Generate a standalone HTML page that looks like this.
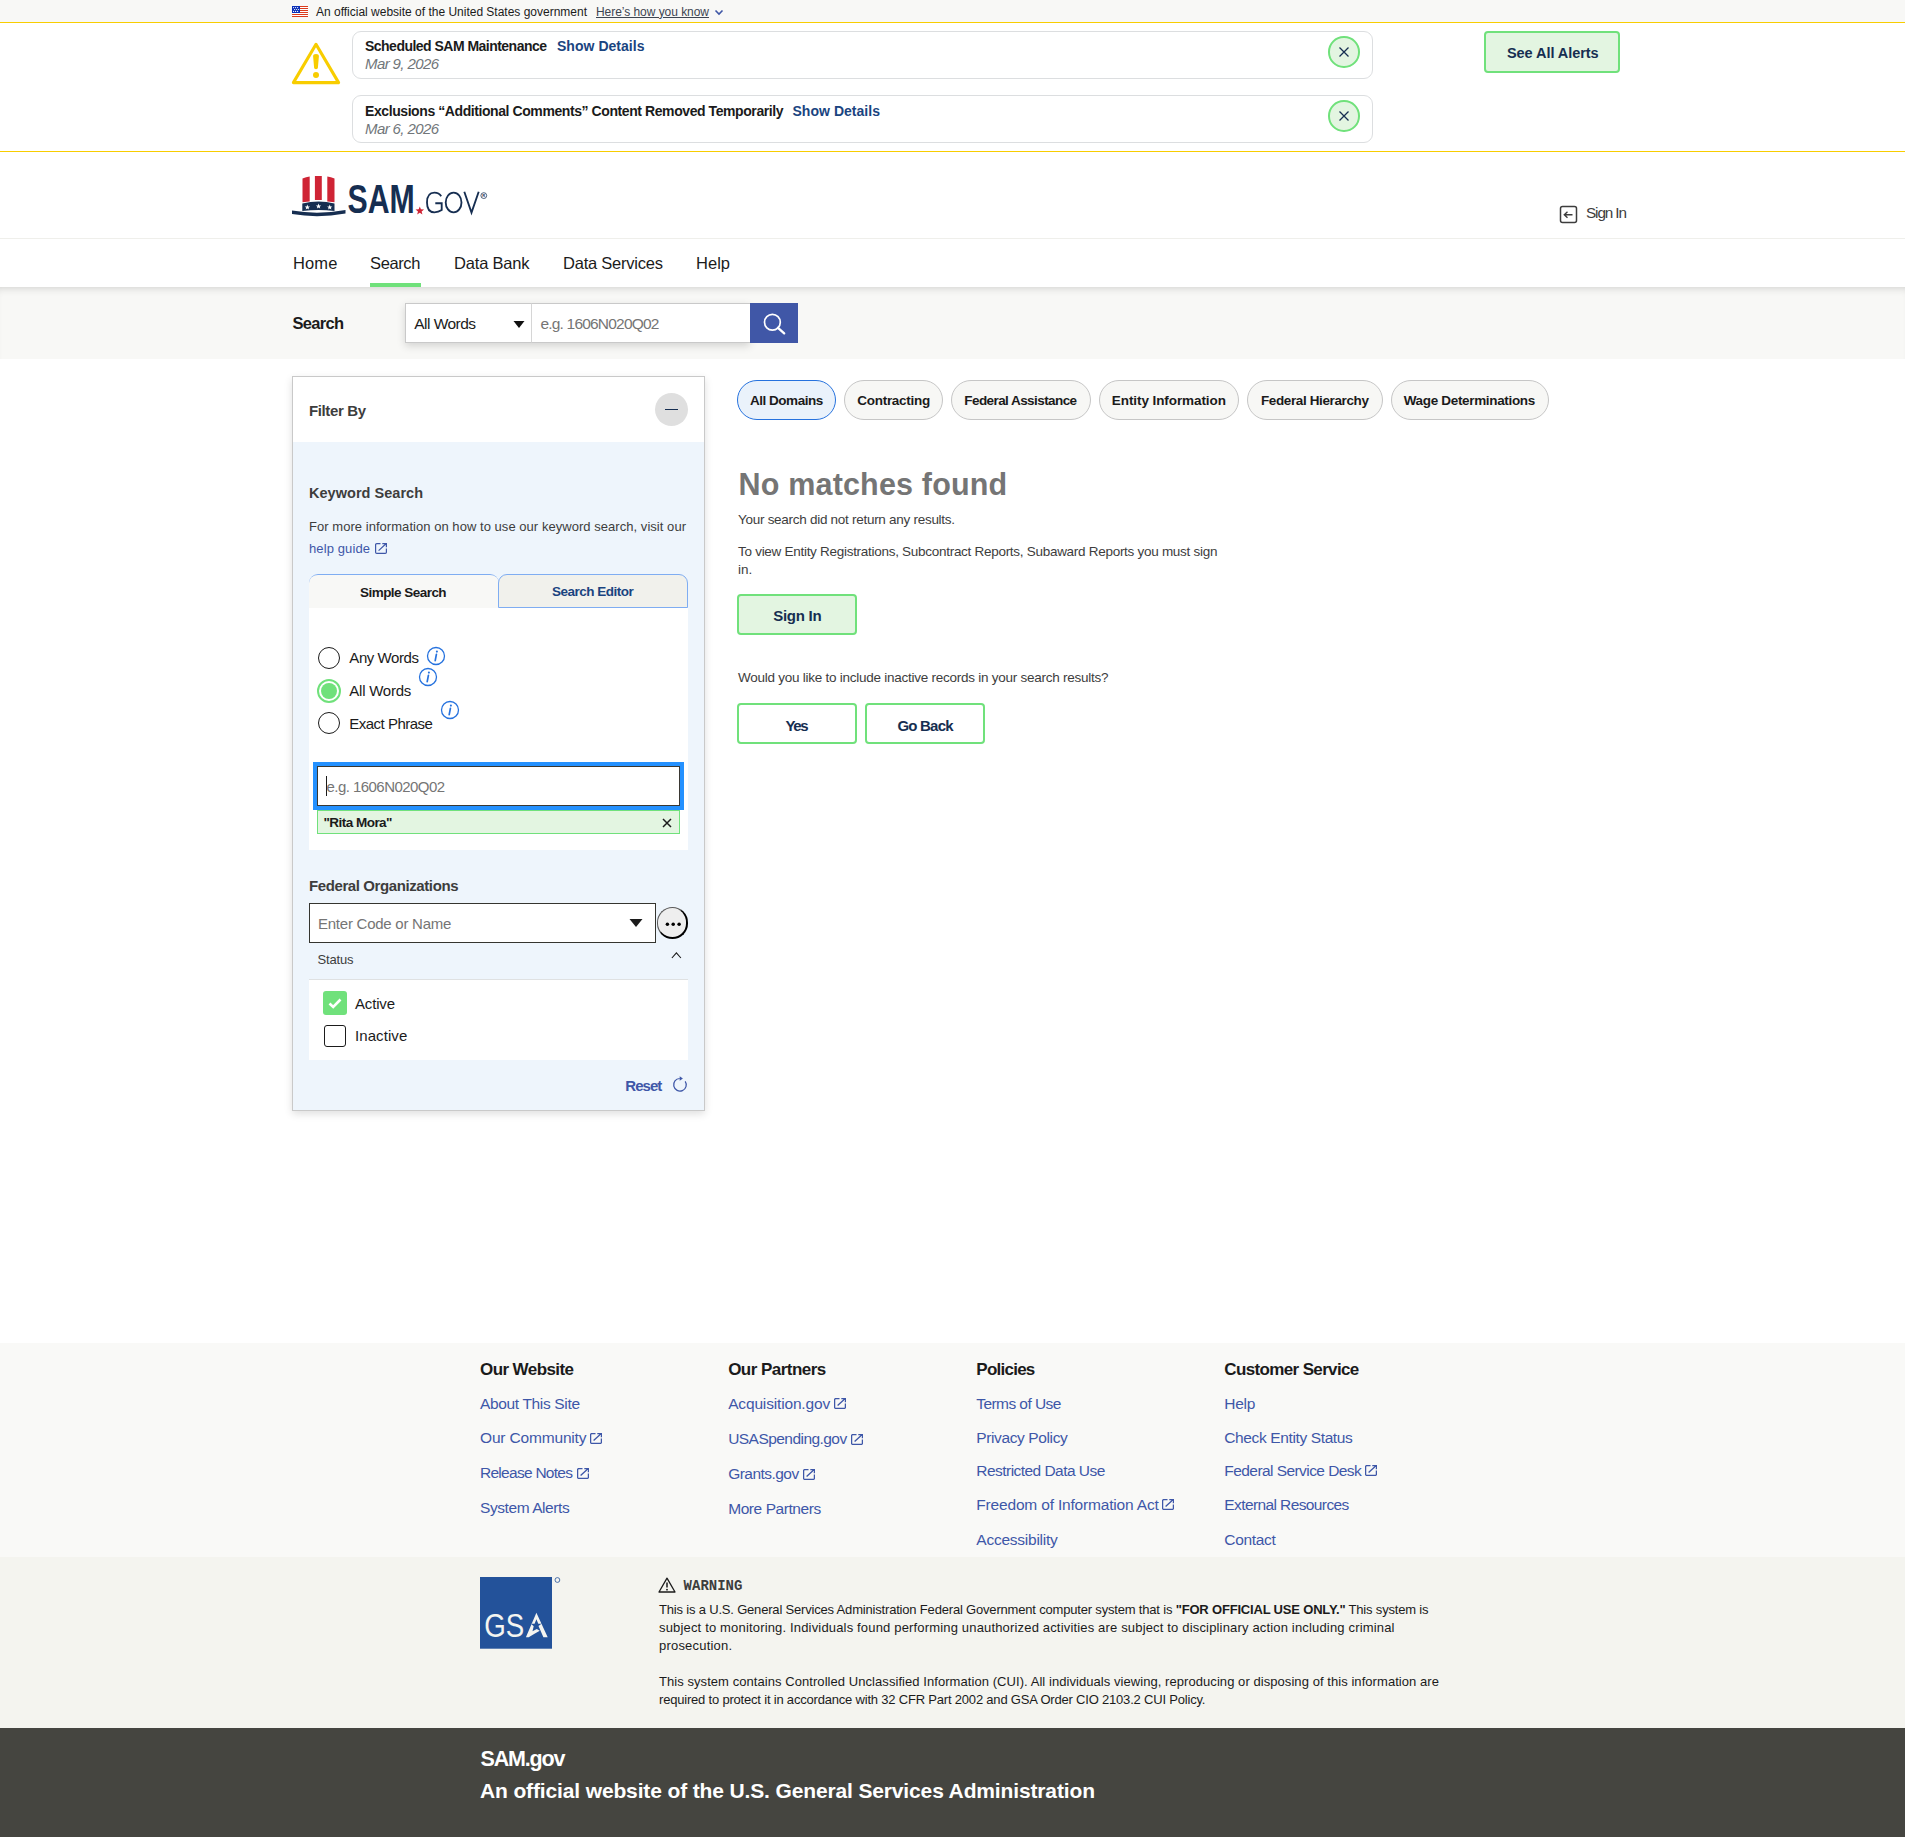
<!DOCTYPE html>
<html><head><meta charset="utf-8"><title>SAM.gov Search</title>
<style>
html,body{margin:0;padding:0;}
body{width:1905px;height:1837px;position:relative;overflow:hidden;background:#fff;font-family:"Liberation Sans",sans-serif;}
</style></head><body>
<div style="position:absolute;left:0px;top:0px;width:1905px;height:22px;background:#f8f8f6;"></div>
<svg style="position:absolute;left:292px;top:6px" width="16" height="11" viewBox="0 0 16 11" shape-rendering="crispEdges">
<rect width="16" height="11" fill="#fff"/>
<g fill="#db3b1c"><rect y="0" width="16" height="1"/><rect y="2" width="16" height="1"/><rect y="4" width="16" height="1"/><rect y="6" width="16" height="1"/><rect y="8" width="16" height="1"/><rect y="10" width="16" height="1"/></g>
<rect width="8" height="7" fill="#0b30b8"/>
<g fill="#fff" shape-rendering="auto"><circle cx="1.6" cy="1.6" r=".6"/><circle cx="3.6" cy="1.6" r=".6"/><circle cx="5.6" cy="1.6" r=".6"/><circle cx="2.6" cy="3.5" r=".6"/><circle cx="4.6" cy="3.5" r=".6"/><circle cx="6.6" cy="3.5" r=".6"/><circle cx="1.6" cy="5.4" r=".6"/><circle cx="3.6" cy="5.4" r=".6"/><circle cx="5.6" cy="5.4" r=".6"/></g>
</svg>
<div style="position:absolute;left:316px;top:5.84px;font-size:12px;line-height:12px;white-space:nowrap;color:#1b1b1b;font-family:'Liberation Sans', sans-serif;letter-spacing:-0.005px;">An official website of the United States government</div>
<div style="position:absolute;left:596px;top:5.84px;font-size:12px;line-height:12px;white-space:nowrap;color:#3d4551;font-family:'Liberation Sans', sans-serif;letter-spacing:-0.046px;text-decoration:underline;">Here’s how you know</div>
<svg style="position:absolute;left:714px;top:8px" width="10" height="8" viewBox="0 0 10 8"><path d="M1.5 2.5 L5 6 L8.5 2.5" fill="none" stroke="#3f57a6" stroke-width="1.6"/></svg>
<div style="position:absolute;left:0px;top:22px;width:1905px;height:1px;background:#f8cd00;"></div>
<svg style="position:absolute;left:290px;top:40px" width="52" height="48" viewBox="0 0 52 48">
<path d="M26 4.3 L48.6 42.6 L3.4 42.6 Z" fill="none" stroke="#f8cd00" stroke-width="3.1" stroke-linejoin="round"/>
<path d="M23.1 16.2 Q23.1 14 26 14 Q28.9 14 28.9 16.2 L27.9 27.8 Q27.9 29.2 26 29.2 Q24.1 29.2 24.1 27.8 Z" fill="#f8cd00"/>
<circle cx="26" cy="35" r="3" fill="#f8cd00"/>
</svg>
<div style="position:absolute;left:352px;top:31px;width:1021px;height:48px;border:1px solid #dcdee0;border-radius:9px;box-sizing:border-box;background:#fff;"></div>
<div style="position:absolute;left:365px;top:39.15px;font-size:14px;line-height:14px;white-space:nowrap;color:#1b1b1b;font-family:'Liberation Sans', sans-serif;font-weight:700;letter-spacing:-0.520px;">Scheduled SAM Maintenance</div>
<div style="position:absolute;left:557px;top:39.15px;font-size:14px;line-height:14px;white-space:nowrap;color:#1a4480;font-family:'Liberation Sans', sans-serif;font-weight:700;letter-spacing:0.034px;">Show Details</div>
<div style="position:absolute;left:365px;top:56.10px;font-size:15px;line-height:15px;white-space:nowrap;color:#71767a;font-family:'Liberation Sans', sans-serif;font-style:italic;letter-spacing:-0.605px;">Mar 9, 2026</div>
<div style="position:absolute;left:1328px;top:36.1px;width:31.6px;height:31.6px;box-sizing:border-box;border:2px solid #70e17b;border-radius:50%;background:#e3f5e1;"></div>
<svg style="position:absolute;left:1336.8px;top:45.1px" width="14" height="14" viewBox="0 0 14 14"><path d="M2.5 2.5 L11.5 11.5 M11.5 2.5 L2.5 11.5" stroke="#162e51" stroke-width="1.3"/></svg>
<div style="position:absolute;left:352px;top:95px;width:1021px;height:48px;border:1px solid #dcdee0;border-radius:9px;box-sizing:border-box;background:#fff;"></div>
<div style="position:absolute;left:365px;top:103.65px;font-size:14px;line-height:14px;white-space:nowrap;color:#1b1b1b;font-family:'Liberation Sans', sans-serif;font-weight:700;letter-spacing:-0.417px;">Exclusions “Additional Comments” Content Removed Temporarily</div>
<div style="position:absolute;left:792.5px;top:103.65px;font-size:14px;line-height:14px;white-space:nowrap;color:#1a4480;font-family:'Liberation Sans', sans-serif;font-weight:700;letter-spacing:0.034px;">Show Details</div>
<div style="position:absolute;left:365px;top:120.60px;font-size:15px;line-height:15px;white-space:nowrap;color:#71767a;font-family:'Liberation Sans', sans-serif;font-style:italic;letter-spacing:-0.605px;">Mar 6, 2026</div>
<div style="position:absolute;left:1328px;top:100.1px;width:31.6px;height:31.6px;box-sizing:border-box;border:2px solid #70e17b;border-radius:50%;background:#e3f5e1;"></div>
<svg style="position:absolute;left:1336.8px;top:109.1px" width="14" height="14" viewBox="0 0 14 14"><path d="M2.5 2.5 L11.5 11.5 M11.5 2.5 L2.5 11.5" stroke="#162e51" stroke-width="1.3"/></svg>
<div style="position:absolute;left:1484px;top:31px;width:136px;height:42px;border:2px solid #70e17b;border-radius:4px;box-sizing:border-box;background:#e3f5e1;"></div>
<div style="position:absolute;left:1507px;top:45.73px;font-size:14.5px;line-height:14.5px;white-space:nowrap;color:#162e51;font-family:'Liberation Sans', sans-serif;font-weight:700;letter-spacing:-0.062px;">See All Alerts</div>
<div style="position:absolute;left:0px;top:151px;width:1905px;height:1px;background:#f8cd00;"></div>
<svg style="position:absolute;left:286px;top:168px" width="210" height="56" viewBox="0 0 210 56">
<path d="M16.5 10.5 Q20 9.2 23.7 8.6 L23.7 33.5 L16.5 34.2 Z" fill="#cf2435"/>
<path d="M28.9 8 L35.8 8 L35.8 32 L28.9 32 Z" fill="#cf2435"/>
<path d="M41.3 8.6 Q45 9.2 48.5 10.5 L48.5 34.2 L41.3 33.5 Z" fill="#cf2435"/>
<path d="M16.3 35.5 Q32.5 31.5 48.5 35.5 L48.5 43 Q32.5 41 16.3 43 Z" fill="#162e51"/>
<g fill="#fff"><polygon points="21.3,36.6 22.1,38.5 24,38.6 22.5,39.8 23,41.6 21.3,40.6 19.7,41.6 20.2,39.8 18.7,38.6 20.6,38.5"/>
<polygon points="32.5,35.6 33.3,37.5 35.2,37.6 33.7,38.8 34.2,40.6 32.5,39.6 30.9,40.6 31.4,38.8 29.9,37.6 31.8,37.5"/>
<polygon points="43.7,36.6 44.5,38.5 46.4,38.6 44.9,39.8 45.4,41.6 43.7,40.6 42.1,41.6 42.6,39.8 41.1,38.6 43,38.5"/></g>
<path d="M6 42.5 Q32 47 59.5 42 L59.5 45.5 Q32 50.5 6 46 Z" fill="#162e51"/>
<text x="61.5" y="45.3" font-family="Liberation Sans" font-weight="700" font-size="40.5" fill="#162e51" textLength="67.2" lengthAdjust="spacingAndGlyphs">SAM</text>
<polygon points="133.80,38.40 134.92,41.36 138.08,41.51 135.61,43.49 136.45,46.54 133.80,44.80 131.15,46.54 131.99,43.49 129.52,41.51 132.68,41.36" fill="#cf2435"/>
<g fill="none" stroke="#162e51" stroke-width="1.85">
<path d="M155.2 28.2 Q153 24.6 148.4 24.6 Q141 24.6 141 34.45 Q141 44.3 148.4 44.3 Q152.5 44.3 155.7 42 L155.7 35.2 L149.3 35.2"/>
<ellipse cx="167.6" cy="34.45" rx="7.9" ry="9.85"/>
<path d="M178.3 23.7 L185.5 44.6 L192.7 23.7"/>
</g>
<circle cx="197.8" cy="27.6" r="2.9" fill="none" stroke="#162e51" stroke-width="0.75"/>
<text x="196.3" y="29.2" font-family="Liberation Sans" font-size="4" font-weight="700" fill="#162e51">R</text>
</svg>
<svg style="position:absolute;left:1559px;top:205px" width="19" height="19" viewBox="0 0 19 19">
<rect x="1.5" y="1.5" width="16" height="16" rx="2" fill="none" stroke="#3d3d3d" stroke-width="1.5"/>
<path d="M13.5 9.7 L5.5 9.7 M8.5 6.7 L5.3 9.7 L8.5 12.7" fill="none" stroke="#3d3d3d" stroke-width="1.4"/>
</svg>
<div style="position:absolute;left:1586px;top:205.05px;font-size:15.3px;line-height:15.3px;white-space:nowrap;color:#3d3d3d;font-family:'Liberation Sans', sans-serif;letter-spacing:-1.106px;">Sign In</div>
<div style="position:absolute;left:0px;top:238px;width:1905px;height:1px;background:#efefeb;"></div>
<div style="position:absolute;left:293px;top:255.03px;font-size:16.5px;line-height:16.5px;white-space:nowrap;color:#1b1b1b;font-family:'Liberation Sans', sans-serif;letter-spacing:0.129px;">Home</div>
<div style="position:absolute;left:370px;top:255.03px;font-size:16.5px;line-height:16.5px;white-space:nowrap;color:#1b1b1b;font-family:'Liberation Sans', sans-serif;letter-spacing:-0.376px;">Search</div>
<div style="position:absolute;left:454px;top:255.03px;font-size:16.5px;line-height:16.5px;white-space:nowrap;color:#1b1b1b;font-family:'Liberation Sans', sans-serif;letter-spacing:-0.181px;">Data Bank</div>
<div style="position:absolute;left:563px;top:255.03px;font-size:16.5px;line-height:16.5px;white-space:nowrap;color:#1b1b1b;font-family:'Liberation Sans', sans-serif;letter-spacing:-0.226px;">Data Services</div>
<div style="position:absolute;left:696px;top:255.03px;font-size:16.5px;line-height:16.5px;white-space:nowrap;color:#1b1b1b;font-family:'Liberation Sans', sans-serif;letter-spacing:0.022px;">Help</div>
<div style="position:absolute;left:370px;top:283px;width:51px;height:4px;background:#70e17b;"></div>
<div style="position:absolute;left:0px;top:287px;width:1905px;height:72px;background:#f8f8f6;box-shadow:inset 0 7px 10px -7px rgba(0,0,0,.2);"></div>
<div style="position:absolute;left:292.5px;top:315.03px;font-size:16.5px;line-height:16.5px;white-space:nowrap;color:#1b1b1b;font-family:'Liberation Sans', sans-serif;font-weight:700;letter-spacing:-0.667px;">Search</div>
<div style="position:absolute;left:405px;top:303px;width:345px;height:40px;box-shadow:0 3px 8px rgba(0,0,0,.15);"></div>
<div style="position:absolute;left:405px;top:303px;width:127px;height:40px;background:#fff;border:1px solid #c9c9c9;box-sizing:border-box;"></div>
<div style="position:absolute;left:414.3px;top:316.18px;font-size:15.5px;line-height:15.5px;white-space:nowrap;color:#1b1b1b;font-family:'Liberation Sans', sans-serif;letter-spacing:-0.542px;">All Words</div>
<svg style="position:absolute;left:513px;top:320px" width="12" height="9" viewBox="0 0 12 9"><path d="M0.5 1 L11.5 1 L6 8 Z" fill="#111"/></svg>
<div style="position:absolute;left:531px;top:303px;width:220px;height:40px;background:#fff;border:1px solid #c9c9c9;border-left:1px solid #d6d6d6;box-sizing:border-box;"></div>
<div style="position:absolute;left:540.4px;top:316.18px;font-size:15.5px;line-height:15.5px;white-space:nowrap;color:#757575;font-family:'Liberation Sans', sans-serif;letter-spacing:-0.799px;">e.g. 1606N020Q02</div>
<div style="position:absolute;left:750px;top:303px;width:48px;height:40px;background:#4057a7;"></div>
<svg style="position:absolute;left:760px;top:311px" width="28" height="28" viewBox="0 0 28 28"><circle cx="12.4" cy="11.2" r="7.9" fill="none" stroke="#fff" stroke-width="1.7"/><path d="M18 16.8 L24.2 22.4" stroke="#fff" stroke-width="2.3" stroke-linecap="round"/></svg>
<div style="position:absolute;left:292px;top:376px;width:413px;height:735px;border:1px solid #c9c9c9;box-sizing:border-box;background:#eef5fc;box-shadow:0 3px 8px rgba(0,0,0,.13);"></div>
<div style="position:absolute;left:293px;top:377px;width:411px;height:65px;background:#fff;"></div>
<div style="position:absolute;left:309px;top:403.30px;font-size:15px;line-height:15px;white-space:nowrap;color:#3d3d3d;font-family:'Liberation Sans', sans-serif;font-weight:700;letter-spacing:-0.377px;">Filter By</div>
<div style="position:absolute;left:655px;top:393px;width:33px;height:33px;border-radius:50%;background:#dfdfdf;"></div>
<div style="position:absolute;left:665px;top:408.5px;width:13px;height:1.6px;background:#162e51;"></div>
<div style="position:absolute;left:309px;top:485.73px;font-size:14.5px;line-height:14.5px;white-space:nowrap;color:#3d3d3d;font-family:'Liberation Sans', sans-serif;font-weight:700;letter-spacing:0.029px;">Keyword Search</div>
<div style="position:absolute;left:309px;top:520.00px;font-size:13px;line-height:13px;white-space:nowrap;color:#3d3d3d;font-family:'Liberation Sans', sans-serif;letter-spacing:0.043px;">For more information on how to use our keyword search, visit our</div>
<div style="position:absolute;left:309px;top:542.00px;font-size:13px;line-height:13px;white-space:nowrap;color:#3e57a8;font-family:'Liberation Sans', sans-serif;letter-spacing:0.112px;">help guide</div>
<svg style="position:absolute;left:375px;top:543px" width="12" height="11" viewBox="0 0 12 11"><path d="M5.5 0.6 H1.8 Q0.6 0.6 0.6 1.8 V9.2 Q0.6 10.4 1.8 10.4 H10.2 Q11.4 10.4 11.4 9.2 V5.6" fill="none" stroke="#3e57a8" stroke-width="1.2"/><path d="M3.6 7.6 L11 0.7 M7.3 0.6 H11.4 V4.3" fill="none" stroke="#3e57a8" stroke-width="1.2"/></svg>
<div style="position:absolute;left:309px;top:608px;width:379px;height:242px;background:#fff;"></div>
<div style="position:absolute;left:309px;top:574px;width:190px;height:34px;background:#f8f8f6;border-top:1px solid #7fadf2;border-radius:9px 9px 0 0;box-sizing:border-box;"></div>
<div style="position:absolute;left:498px;top:574px;width:190px;height:34px;background:#f1f1ec;border:1px solid #7fadf2;border-radius:9px 9px 0 0;box-sizing:border-box;"></div>
<div style="position:absolute;left:360px;top:585.57px;font-size:13.5px;line-height:13.5px;white-space:nowrap;color:#1b1b1b;font-family:'Liberation Sans', sans-serif;font-weight:700;letter-spacing:-0.537px;">Simple Search</div>
<div style="position:absolute;left:552px;top:584.57px;font-size:13.5px;line-height:13.5px;white-space:nowrap;color:#1a4480;font-family:'Liberation Sans', sans-serif;font-weight:700;letter-spacing:-0.498px;">Search Editor</div>
<div style="position:absolute;left:318px;top:646.7px;width:22px;height:22px;border-radius:50%;box-sizing:border-box;border:1.6px solid #1b1b1b;background:#fff;"></div>
<div style="position:absolute;left:349.3px;top:650.30px;font-size:15px;line-height:15px;white-space:nowrap;color:#1b1b1b;font-family:'Liberation Sans', sans-serif;letter-spacing:-0.423px;">Any Words</div>
<svg style="position:absolute;left:426.0px;top:646.0px" width="20" height="20" viewBox="0 0 20 20"><circle cx="10" cy="10" r="8.5" fill="none" stroke="#2672de" stroke-width="1.3"/><path d="M10.4 8.3 L9.2 14.6" stroke="#2672de" stroke-width="1.7" stroke-linecap="round"/><circle cx="10.9" cy="5.6" r="1.05" fill="#2672de"/></svg>
<div style="position:absolute;left:317px;top:678.8px;width:24px;height:24px;border-radius:50%;box-sizing:border-box;border:2.5px solid #70e17b;background:#fff;"></div>
<div style="position:absolute;left:321.1px;top:682.9px;width:15.8px;height:15.8px;border-radius:50%;background:#70e17b;"></div>
<div style="position:absolute;left:349.3px;top:683.40px;font-size:15px;line-height:15px;white-space:nowrap;color:#1b1b1b;font-family:'Liberation Sans', sans-serif;letter-spacing:-0.238px;">All Words</div>
<svg style="position:absolute;left:418.0px;top:667.4px" width="20" height="20" viewBox="0 0 20 20"><circle cx="10" cy="10" r="8.5" fill="none" stroke="#2672de" stroke-width="1.3"/><path d="M10.4 8.3 L9.2 14.6" stroke="#2672de" stroke-width="1.7" stroke-linecap="round"/><circle cx="10.9" cy="5.6" r="1.05" fill="#2672de"/></svg>
<div style="position:absolute;left:318px;top:711.9px;width:22px;height:22px;border-radius:50%;box-sizing:border-box;border:1.6px solid #1b1b1b;background:#fff;"></div>
<div style="position:absolute;left:349.3px;top:715.50px;font-size:15px;line-height:15px;white-space:nowrap;color:#1b1b1b;font-family:'Liberation Sans', sans-serif;letter-spacing:-0.510px;">Exact Phrase</div>
<svg style="position:absolute;left:440.2px;top:700.2px" width="20" height="20" viewBox="0 0 20 20"><circle cx="10" cy="10" r="8.5" fill="none" stroke="#2672de" stroke-width="1.3"/><path d="M10.4 8.3 L9.2 14.6" stroke="#2672de" stroke-width="1.7" stroke-linecap="round"/><circle cx="10.9" cy="5.6" r="1.05" fill="#2672de"/></svg>
<div style="position:absolute;left:313px;top:762px;width:371px;height:48px;background:#2491ff;"></div>
<div style="position:absolute;left:317px;top:766px;width:363px;height:40px;background:#fff;border:1px solid #3a3833;box-sizing:border-box;"></div>
<div style="position:absolute;left:326px;top:776px;width:1.3px;height:20px;background:#1b1b1b;"></div>
<div style="position:absolute;left:326.5px;top:779.30px;font-size:15px;line-height:15px;white-space:nowrap;color:#757575;font-family:'Liberation Sans', sans-serif;letter-spacing:-0.544px;">e.g. 1606N020Q02</div>
<div style="position:absolute;left:317px;top:810px;width:363px;height:24px;background:#e3f5e1;border:1px solid #70e17b;box-sizing:border-box;"></div>
<div style="position:absolute;left:323.5px;top:816.07px;font-size:13.5px;line-height:13.5px;white-space:nowrap;color:#1b1b1b;font-family:'Liberation Sans', sans-serif;font-weight:700;letter-spacing:-0.531px;">&quot;Rita Mora&quot;</div>
<svg style="position:absolute;left:661px;top:817px" width="12" height="12" viewBox="0 0 12 12"><path d="M2 2 L10 10 M10 2 L2 10" stroke="#1b1b1b" stroke-width="1.5"/></svg>
<div style="position:absolute;left:309px;top:877.80px;font-size:15px;line-height:15px;white-space:nowrap;color:#3d3d3d;font-family:'Liberation Sans', sans-serif;font-weight:700;letter-spacing:-0.402px;">Federal Organizations</div>
<div style="position:absolute;left:309px;top:903px;width:347px;height:40px;background:#fff;border:1.3px solid #35352f;box-sizing:border-box;"></div>
<div style="position:absolute;left:318px;top:916.30px;font-size:15px;line-height:15px;white-space:nowrap;color:#757575;font-family:'Liberation Sans', sans-serif;letter-spacing:-0.245px;">Enter Code or Name</div>
<svg style="position:absolute;left:629px;top:918px" width="14" height="10" viewBox="0 0 14 10"><path d="M0.5 1 L13.5 1 L7 9 Z" fill="#1b1b1b"/></svg>
<div style="position:absolute;left:656.5px;top:907px;width:31.5px;height:31.5px;border-radius:50%;box-sizing:border-box;border-style:solid;border-width:1.5px 2.2px 2.2px 1.5px;border-color:#5a5a5a #000 #000 #5a5a5a;background:#eeeeee;"></div>
<svg style="position:absolute;left:663px;top:921px" width="20" height="6" viewBox="0 0 20 6"><circle cx="4.4" cy="3.2" r="1.75" fill="#000"/><circle cx="10.2" cy="3.2" r="1.75" fill="#000"/><circle cx="16.1" cy="3.2" r="1.75" fill="#000"/></svg>
<div style="position:absolute;left:317.5px;top:952.60px;font-size:13px;line-height:13px;white-space:nowrap;color:#3d3d3d;font-family:'Liberation Sans', sans-serif;letter-spacing:-0.171px;">Status</div>
<svg style="position:absolute;left:670px;top:950px" width="13" height="10" viewBox="0 0 13 10"><path d="M1.9 8 L6.4 2.8 L10.9 8" fill="none" stroke="#1b1b1b" stroke-width="1.1"/></svg>
<div style="position:absolute;left:309px;top:979px;width:379px;height:81px;background:#fff;border-top:1px solid #dfe1e2;box-sizing:border-box;"></div>
<div style="position:absolute;left:323px;top:991px;width:24px;height:24px;border-radius:3px;background:#70e17b;"></div>
<svg style="position:absolute;left:323px;top:991px" width="24" height="24" viewBox="0 0 24 24"><path d="M6.5 12.5 L10.2 16 L17.5 8.5" fill="none" stroke="#fff" stroke-width="2.6"/></svg>
<div style="position:absolute;left:355px;top:996.30px;font-size:15px;line-height:15px;white-space:nowrap;color:#1b1b1b;font-family:'Liberation Sans', sans-serif;letter-spacing:-0.169px;">Active</div>
<div style="position:absolute;left:324px;top:1025px;width:22px;height:22px;border-radius:3px;box-sizing:border-box;border:1.6px solid #1b1b1b;background:#fff;"></div>
<div style="position:absolute;left:355px;top:1028.30px;font-size:15px;line-height:15px;white-space:nowrap;color:#1b1b1b;font-family:'Liberation Sans', sans-serif;letter-spacing:0.087px;">Inactive</div>
<div style="position:absolute;left:625.3px;top:1077.90px;font-size:15px;line-height:15px;white-space:nowrap;color:#3e57a8;font-family:'Liberation Sans', sans-serif;font-weight:700;letter-spacing:-0.964px;">Reset</div>
<svg style="position:absolute;left:671px;top:1075px" width="18" height="18" viewBox="0 0 18 18"><path d="M14.2 6.3 A6.3 6.3 0 1 1 8.7 3.5" fill="none" stroke="#3e57a8" stroke-width="1.25"/><path d="M8.7 1.2 L11.9 3.5 L8.7 5.8 Z" fill="#3e57a8"/></svg>
<div style="position:absolute;left:737px;top:380px;width:99px;height:40px;background:#eaf2fb;border:1px solid #2672de;border-radius:20px;box-sizing:border-box;"></div>
<div style="position:absolute;left:750px;top:393.57px;font-size:13.5px;line-height:13.5px;white-space:nowrap;color:#1b1b1b;font-family:'Liberation Sans', sans-serif;font-weight:700;letter-spacing:-0.481px;">All Domains</div>
<div style="position:absolute;left:844px;top:380px;width:98.5px;height:40px;background:#f7f7f5;border:1px solid #c6c6c6;border-radius:20px;box-sizing:border-box;"></div>
<div style="position:absolute;left:857.3px;top:393.57px;font-size:13.5px;line-height:13.5px;white-space:nowrap;color:#1b1b1b;font-family:'Liberation Sans', sans-serif;font-weight:700;letter-spacing:-0.285px;">Contracting</div>
<div style="position:absolute;left:951px;top:380px;width:139.5px;height:40px;background:#f7f7f5;border:1px solid #c6c6c6;border-radius:20px;box-sizing:border-box;"></div>
<div style="position:absolute;left:964.3px;top:393.57px;font-size:13.5px;line-height:13.5px;white-space:nowrap;color:#1b1b1b;font-family:'Liberation Sans', sans-serif;font-weight:700;letter-spacing:-0.574px;">Federal Assistance</div>
<div style="position:absolute;left:1099px;top:380px;width:140px;height:40px;background:#f7f7f5;border:1px solid #c6c6c6;border-radius:20px;box-sizing:border-box;"></div>
<div style="position:absolute;left:1111.8px;top:393.57px;font-size:13.5px;line-height:13.5px;white-space:nowrap;color:#1b1b1b;font-family:'Liberation Sans', sans-serif;font-weight:700;letter-spacing:-0.082px;">Entity Information</div>
<div style="position:absolute;left:1247px;top:380px;width:136px;height:40px;background:#f7f7f5;border:1px solid #c6c6c6;border-radius:20px;box-sizing:border-box;"></div>
<div style="position:absolute;left:1260.9px;top:393.57px;font-size:13.5px;line-height:13.5px;white-space:nowrap;color:#1b1b1b;font-family:'Liberation Sans', sans-serif;font-weight:700;letter-spacing:-0.372px;">Federal Hierarchy</div>
<div style="position:absolute;left:1391px;top:380px;width:158px;height:40px;background:#f7f7f5;border:1px solid #c6c6c6;border-radius:20px;box-sizing:border-box;"></div>
<div style="position:absolute;left:1403.7px;top:393.57px;font-size:13.5px;line-height:13.5px;white-space:nowrap;color:#1b1b1b;font-family:'Liberation Sans', sans-serif;font-weight:700;letter-spacing:-0.329px;">Wage Determinations</div>
<div style="position:absolute;left:738.6px;top:468.78px;font-size:30.5px;line-height:30.5px;white-space:nowrap;color:#757575;font-family:'Liberation Sans', sans-serif;font-weight:700;letter-spacing:0.171px;">No matches found</div>
<div style="position:absolute;left:738px;top:512.57px;font-size:13.5px;line-height:13.5px;white-space:nowrap;color:#3d3d3d;font-family:'Liberation Sans', sans-serif;letter-spacing:-0.279px;">Your search did not return any results.</div>
<div style="position:absolute;left:738px;top:544.57px;font-size:13.5px;line-height:13.5px;white-space:nowrap;color:#3d3d3d;font-family:'Liberation Sans', sans-serif;letter-spacing:-0.282px;">To view Entity Registrations, Subcontract Reports, Subaward Reports you must sign</div>
<div style="position:absolute;left:738px;top:562.57px;font-size:13.5px;line-height:13.5px;white-space:nowrap;color:#3d3d3d;font-family:'Liberation Sans', sans-serif;">in.</div>
<div style="position:absolute;left:737px;top:594px;width:120px;height:41px;background:#e3f5e1;border:2px solid #70e17b;border-radius:4px;box-sizing:border-box;"></div>
<div style="position:absolute;left:773.2px;top:608.30px;font-size:15px;line-height:15px;white-space:nowrap;color:#162e51;font-family:'Liberation Sans', sans-serif;font-weight:700;letter-spacing:-0.266px;">Sign In</div>
<div style="position:absolute;left:738px;top:670.57px;font-size:13.5px;line-height:13.5px;white-space:nowrap;color:#3d3d3d;font-family:'Liberation Sans', sans-serif;letter-spacing:-0.253px;">Would you like to include inactive records in your search results?</div>
<div style="position:absolute;left:737px;top:703px;width:120px;height:41px;background:#fff;border:2px solid #70e17b;border-radius:4px;box-sizing:border-box;"></div>
<div style="position:absolute;left:785.5px;top:718.30px;font-size:15px;line-height:15px;white-space:nowrap;color:#162e51;font-family:'Liberation Sans', sans-serif;font-weight:700;letter-spacing:-1.330px;">Yes</div>
<div style="position:absolute;left:865px;top:703px;width:120px;height:41px;background:#fff;border:2px solid #70e17b;border-radius:4px;box-sizing:border-box;"></div>
<div style="position:absolute;left:897.5px;top:718.30px;font-size:15px;line-height:15px;white-space:nowrap;color:#162e51;font-family:'Liberation Sans', sans-serif;font-weight:700;letter-spacing:-0.809px;">Go Back</div>
<div style="position:absolute;left:0px;top:1343px;width:1905px;height:214px;background:#f9f9f7;"></div>
<div style="position:absolute;left:480px;top:1360.61px;font-size:17px;line-height:17px;white-space:nowrap;color:#1b1b1b;font-family:'Liberation Sans', sans-serif;font-weight:700;letter-spacing:-0.582px;">Our Website</div>
<div style="position:absolute;left:480px;top:1395.58px;font-size:15.5px;line-height:15.5px;white-space:nowrap;color:#3e57a8;font-family:'Liberation Sans', sans-serif;letter-spacing:-0.345px;">About This Site</div>
<div style="position:absolute;left:480px;top:1430.28px;font-size:15.5px;line-height:15.5px;white-space:nowrap;color:#3e57a8;font-family:'Liberation Sans', sans-serif;letter-spacing:-0.168px;">Our Community</div>
<svg style="position:absolute;left:590.0px;top:1432.9px" width="12" height="11" viewBox="0 0 12 11"><path d="M5.5 0.6 H1.8 Q0.6 0.6 0.6 1.8 V9.2 Q0.6 10.4 1.8 10.4 H10.2 Q11.4 10.4 11.4 9.2 V5.6" fill="none" stroke="#3e57a8" stroke-width="1.3"/><path d="M3.6 7.6 L11 0.7 M7.3 0.6 H11.4 V4.3" fill="none" stroke="#3e57a8" stroke-width="1.3"/></svg>
<div style="position:absolute;left:480px;top:1465.18px;font-size:15.5px;line-height:15.5px;white-space:nowrap;color:#3e57a8;font-family:'Liberation Sans', sans-serif;letter-spacing:-0.722px;">Release Notes</div>
<svg style="position:absolute;left:576.5px;top:1467.8px" width="12" height="11" viewBox="0 0 12 11"><path d="M5.5 0.6 H1.8 Q0.6 0.6 0.6 1.8 V9.2 Q0.6 10.4 1.8 10.4 H10.2 Q11.4 10.4 11.4 9.2 V5.6" fill="none" stroke="#3e57a8" stroke-width="1.3"/><path d="M3.6 7.6 L11 0.7 M7.3 0.6 H11.4 V4.3" fill="none" stroke="#3e57a8" stroke-width="1.3"/></svg>
<div style="position:absolute;left:480px;top:1500.08px;font-size:15.5px;line-height:15.5px;white-space:nowrap;color:#3e57a8;font-family:'Liberation Sans', sans-serif;letter-spacing:-0.421px;">System Alerts</div>
<div style="position:absolute;left:728.2px;top:1360.61px;font-size:17px;line-height:17px;white-space:nowrap;color:#1b1b1b;font-family:'Liberation Sans', sans-serif;font-weight:700;letter-spacing:-0.539px;">Our Partners</div>
<div style="position:absolute;left:728.2px;top:1395.58px;font-size:15.5px;line-height:15.5px;white-space:nowrap;color:#3e57a8;font-family:'Liberation Sans', sans-serif;letter-spacing:-0.161px;">Acquisition.gov</div>
<svg style="position:absolute;left:833.7px;top:1398.2px" width="12" height="11" viewBox="0 0 12 11"><path d="M5.5 0.6 H1.8 Q0.6 0.6 0.6 1.8 V9.2 Q0.6 10.4 1.8 10.4 H10.2 Q11.4 10.4 11.4 9.2 V5.6" fill="none" stroke="#3e57a8" stroke-width="1.3"/><path d="M3.6 7.6 L11 0.7 M7.3 0.6 H11.4 V4.3" fill="none" stroke="#3e57a8" stroke-width="1.3"/></svg>
<div style="position:absolute;left:728.2px;top:1431.08px;font-size:15.5px;line-height:15.5px;white-space:nowrap;color:#3e57a8;font-family:'Liberation Sans', sans-serif;letter-spacing:-0.548px;">USASpending.gov</div>
<svg style="position:absolute;left:850.7px;top:1433.7px" width="12" height="11" viewBox="0 0 12 11"><path d="M5.5 0.6 H1.8 Q0.6 0.6 0.6 1.8 V9.2 Q0.6 10.4 1.8 10.4 H10.2 Q11.4 10.4 11.4 9.2 V5.6" fill="none" stroke="#3e57a8" stroke-width="1.3"/><path d="M3.6 7.6 L11 0.7 M7.3 0.6 H11.4 V4.3" fill="none" stroke="#3e57a8" stroke-width="1.3"/></svg>
<div style="position:absolute;left:728.2px;top:1466.48px;font-size:15.5px;line-height:15.5px;white-space:nowrap;color:#3e57a8;font-family:'Liberation Sans', sans-serif;letter-spacing:-0.535px;">Grants.gov</div>
<svg style="position:absolute;left:802.7px;top:1469.1px" width="12" height="11" viewBox="0 0 12 11"><path d="M5.5 0.6 H1.8 Q0.6 0.6 0.6 1.8 V9.2 Q0.6 10.4 1.8 10.4 H10.2 Q11.4 10.4 11.4 9.2 V5.6" fill="none" stroke="#3e57a8" stroke-width="1.3"/><path d="M3.6 7.6 L11 0.7 M7.3 0.6 H11.4 V4.3" fill="none" stroke="#3e57a8" stroke-width="1.3"/></svg>
<div style="position:absolute;left:728.2px;top:1500.58px;font-size:15.5px;line-height:15.5px;white-space:nowrap;color:#3e57a8;font-family:'Liberation Sans', sans-serif;letter-spacing:-0.433px;">More Partners</div>
<div style="position:absolute;left:976.3px;top:1360.61px;font-size:17px;line-height:17px;white-space:nowrap;color:#1b1b1b;font-family:'Liberation Sans', sans-serif;font-weight:700;letter-spacing:-0.751px;">Policies</div>
<div style="position:absolute;left:976.3px;top:1395.58px;font-size:15.5px;line-height:15.5px;white-space:nowrap;color:#3e57a8;font-family:'Liberation Sans', sans-serif;letter-spacing:-0.572px;">Terms of Use</div>
<div style="position:absolute;left:976.3px;top:1430.28px;font-size:15.5px;line-height:15.5px;white-space:nowrap;color:#3e57a8;font-family:'Liberation Sans', sans-serif;letter-spacing:-0.382px;">Privacy Policy</div>
<div style="position:absolute;left:976.3px;top:1462.58px;font-size:15.5px;line-height:15.5px;white-space:nowrap;color:#3e57a8;font-family:'Liberation Sans', sans-serif;letter-spacing:-0.538px;">Restricted Data Use</div>
<div style="position:absolute;left:976.3px;top:1496.68px;font-size:15.5px;line-height:15.5px;white-space:nowrap;color:#3e57a8;font-family:'Liberation Sans', sans-serif;letter-spacing:-0.178px;">Freedom of Information Act</div>
<svg style="position:absolute;left:1162.3px;top:1499.3px" width="12" height="11" viewBox="0 0 12 11"><path d="M5.5 0.6 H1.8 Q0.6 0.6 0.6 1.8 V9.2 Q0.6 10.4 1.8 10.4 H10.2 Q11.4 10.4 11.4 9.2 V5.6" fill="none" stroke="#3e57a8" stroke-width="1.3"/><path d="M3.6 7.6 L11 0.7 M7.3 0.6 H11.4 V4.3" fill="none" stroke="#3e57a8" stroke-width="1.3"/></svg>
<div style="position:absolute;left:976.3px;top:1531.58px;font-size:15.5px;line-height:15.5px;white-space:nowrap;color:#3e57a8;font-family:'Liberation Sans', sans-serif;letter-spacing:-0.243px;">Accessibility</div>
<div style="position:absolute;left:1224.3px;top:1360.61px;font-size:17px;line-height:17px;white-space:nowrap;color:#1b1b1b;font-family:'Liberation Sans', sans-serif;font-weight:700;letter-spacing:-0.638px;">Customer Service</div>
<div style="position:absolute;left:1224.3px;top:1395.58px;font-size:15.5px;line-height:15.5px;white-space:nowrap;color:#3e57a8;font-family:'Liberation Sans', sans-serif;letter-spacing:-0.293px;">Help</div>
<div style="position:absolute;left:1224.3px;top:1430.28px;font-size:15.5px;line-height:15.5px;white-space:nowrap;color:#3e57a8;font-family:'Liberation Sans', sans-serif;letter-spacing:-0.375px;">Check Entity Status</div>
<div style="position:absolute;left:1224.3px;top:1462.58px;font-size:15.5px;line-height:15.5px;white-space:nowrap;color:#3e57a8;font-family:'Liberation Sans', sans-serif;letter-spacing:-0.561px;">Federal Service Desk</div>
<svg style="position:absolute;left:1365.3px;top:1465.2px" width="12" height="11" viewBox="0 0 12 11"><path d="M5.5 0.6 H1.8 Q0.6 0.6 0.6 1.8 V9.2 Q0.6 10.4 1.8 10.4 H10.2 Q11.4 10.4 11.4 9.2 V5.6" fill="none" stroke="#3e57a8" stroke-width="1.3"/><path d="M3.6 7.6 L11 0.7 M7.3 0.6 H11.4 V4.3" fill="none" stroke="#3e57a8" stroke-width="1.3"/></svg>
<div style="position:absolute;left:1224.3px;top:1497.48px;font-size:15.5px;line-height:15.5px;white-space:nowrap;color:#3e57a8;font-family:'Liberation Sans', sans-serif;letter-spacing:-0.603px;">External Resources</div>
<div style="position:absolute;left:1224.3px;top:1531.58px;font-size:15.5px;line-height:15.5px;white-space:nowrap;color:#3e57a8;font-family:'Liberation Sans', sans-serif;letter-spacing:-0.320px;">Contact</div>
<div style="position:absolute;left:0px;top:1557px;width:1905px;height:171px;background:#f4f4ef;"></div>
<svg style="position:absolute;left:480px;top:1577px" width="82" height="72" viewBox="0 0 82 72">
<rect x="0" y="0" width="72" height="71.7" fill="#23529a"/>
<text x="4.2" y="60.2" font-family="Liberation Sans" font-size="33.5" fill="#f4f4f0" textLength="40" lengthAdjust="spacingAndGlyphs">GS</text>
<path d="M56.4 35.8 L67.7 60.2 L63.4 60.2 L58.5 49 L61.5 46.7 L58.3 46.7 L56.4 42.2 L54.6 46.7 L51 46.7 L53.7 49.3 L52.5 54.3 L56.8 52.1 L59.8 53.8 L54.5 56.8 L48.7 60.2 L45.9 60.2 Z" fill="#f4f4f0"/>
<circle cx="77.4" cy="3" r="2.4" fill="none" stroke="#23529a" stroke-width=".8"/>
</svg>
<svg style="position:absolute;left:658px;top:1577px" width="18" height="16" viewBox="0 0 18 16"><path d="M9 1.2 L17 15 L1 15 Z" fill="none" stroke="#1b1b1b" stroke-width="1.3" stroke-linejoin="round"/><path d="M9 5.5 L9 10.5" stroke="#1b1b1b" stroke-width="1.5"/><circle cx="9" cy="12.7" r=".9" fill="#1b1b1b"/></svg>
<div style="position:absolute;left:683.6px;top:1579.15px;font-size:14px;line-height:14px;white-space:nowrap;color:#3d3d3d;font-family:'Liberation Mono', monospace;font-weight:700;">WARNING</div>
<div style="position:absolute;left:659px;top:1603.00px;font-family:'Liberation Sans',sans-serif;font-size:13px;line-height:13px;white-space:nowrap;color:#1b1b1b;letter-spacing:-0.184px;">This is a U.S. General Services Administration Federal Government computer system that is <b>"FOR OFFICIAL USE ONLY."</b> This system is</div>
<div style="position:absolute;left:659px;top:1621.00px;font-size:13px;line-height:13px;white-space:nowrap;color:#1b1b1b;font-family:'Liberation Sans', sans-serif;letter-spacing:0.168px;">subject to monitoring. Individuals found performing unauthorized activities are subject to disciplinary action including criminal</div>
<div style="position:absolute;left:659px;top:1639.00px;font-size:13px;line-height:13px;white-space:nowrap;color:#1b1b1b;font-family:'Liberation Sans', sans-serif;letter-spacing:0.198px;">prosecution.</div>
<div style="position:absolute;left:659px;top:1675.00px;font-size:13px;line-height:13px;white-space:nowrap;color:#1b1b1b;font-family:'Liberation Sans', sans-serif;letter-spacing:0.061px;">This system contains Controlled Unclassified Information (CUI). All individuals viewing, reproducing or disposing of this information are</div>
<div style="position:absolute;left:659px;top:1693.00px;font-size:13px;line-height:13px;white-space:nowrap;color:#1b1b1b;font-family:'Liberation Sans', sans-serif;letter-spacing:-0.196px;">required to protect it in accordance with 32 CFR Part 2002 and GSA Order CIO 2103.2 CUI Policy.</div>
<div style="position:absolute;left:0px;top:1728px;width:1905px;height:109px;background:#454540;"></div>
<div style="position:absolute;left:480.5px;top:1748.60px;font-size:21.5px;line-height:21.5px;white-space:nowrap;color:#fff;font-family:'Liberation Sans', sans-serif;font-weight:700;letter-spacing:-1.162px;">SAM.gov</div>
<div style="position:absolute;left:480px;top:1780.22px;font-size:21px;line-height:21px;white-space:nowrap;color:#fff;font-family:'Liberation Sans', sans-serif;font-weight:700;letter-spacing:-0.138px;">An official website of the U.S. General Services Administration</div>
</body></html>
